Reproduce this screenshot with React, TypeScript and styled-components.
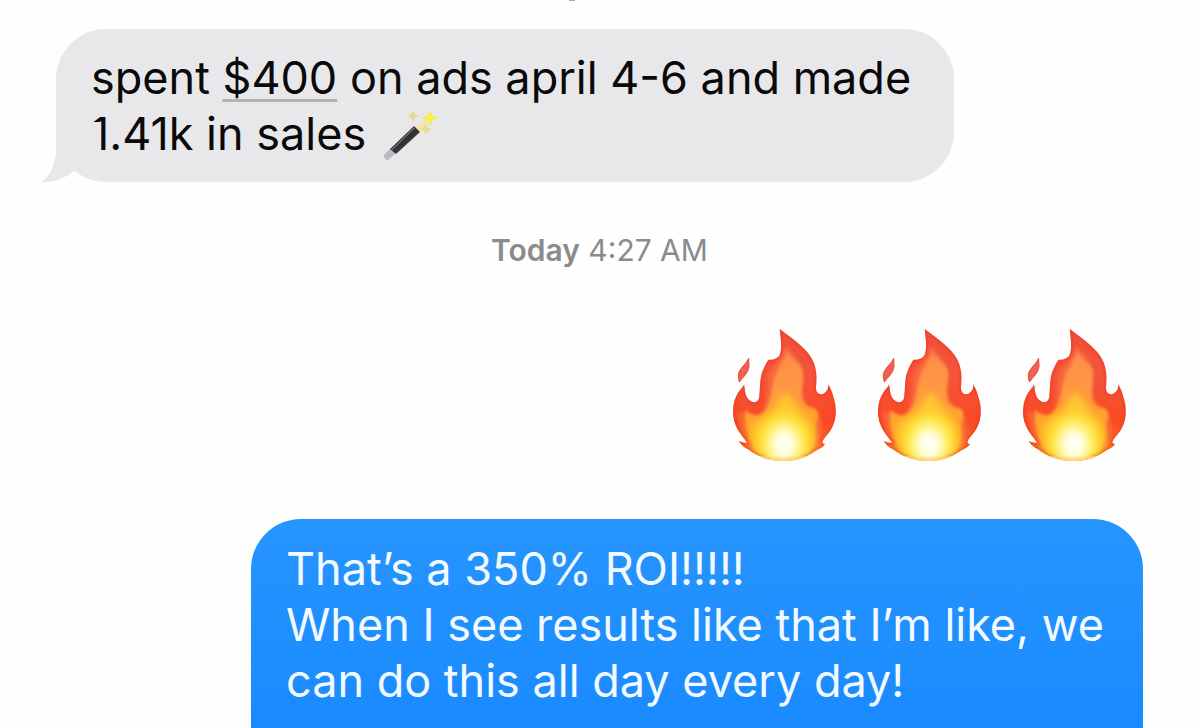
import React from "react";
import styled, { createGlobalStyle } from "styled-components";

const GlobalStyle = createGlobalStyle`
  * { box-sizing: border-box; }
  body {
    margin: 0;
    background: #fefefe;
    font-family: Inter, "Liberation Sans", sans-serif;
  }
`;

const Thread = styled.main`
  display: flex;
  flex-direction: column;
  min-height: 100vh;
  padding: 0 57px 0 56px;
  overflow: hidden;
`;

const EarlierMark = styled.div`
  width: 6px;
  height: 1px;
  margin: 0 0 28px 513px;
  border-radius: 1px;
  background: #a5a5a8;
`;

const Bubble = styled.div<{ $sent?: boolean }>`
  position: relative;
  align-self: ${(p) => (p.$sent ? "flex-end" : "flex-start")};
  flex: ${(p) => (p.$sent ? "1 0 auto" : "none")};
  max-width: ${(p) => (p.$sent ? "892px" : "898px")};
  padding: ${(p) => (p.$sent ? "22px 35px 20px" : "21px 35px 20px")};
  border-radius: ${(p) => (p.$sent ? "50px 50px 0 0" : "50px")};
  background: ${(p) => (p.$sent ? "linear-gradient(#2795fe, #198aff)" : "#e8e8ea")};
  color: ${(p) => (p.$sent ? "#f3faff" : "#0a0a0a")};
`;

const ReceivedBubble = styled(Bubble)`
  width: 100%;
`;

const Message = styled.p`
  margin: 0;
  font-size: 45px;
  line-height: 56px;
`;

const Amount = styled.a`
  color: inherit;
  text-decoration: underline #b3b3b6 3px;
  text-underline-offset: 5px;
  text-decoration-skip-ink: none;
`;

const Tail = styled.svg`
  position: absolute;
  left: -15px;
  bottom: 0;
  width: 60px;
  height: 60px;
`;

const WandIcon = styled.svg`
  width: 56px;
  height: 52px;
  margin-left: 4px;
  vertical-align: -11px;
`;

const Timestamp = styled.time`
  display: block;
  margin: 50px 0 59px;
  text-align: center;
  font-size: 30px;
  line-height: 36px;
  color: #8b8b8e;
`;

const Day = styled.strong`
  font-weight: 600;
`;

const Reactions = styled.div`
  display: flex;
  justify-content: flex-end;
  gap: 35px;
  padding-right: 13px;
  margin-bottom: 57px;
`;

const FlameIcon = styled.svg`
  width: 110px;
  height: 135px;
`;

const BODY =
  "M194 42 C222 64 263 90 284 121 C304 150 307 178 303 216 C302 234 313 241 325 236 C337 230 341 220 339 208 C351 225 354 243 360 263 C367 303 358 336 336 360 C321 377 318 386 330 387 C324 397 314 401 305 405 C276 427 244 438 205 438 C164 438 130 427 99 403 C87 397 77 388 70 377 C80 382 89 384 97 383 C84 365 67 348 58 320 C49 286 56 251 73 228 C80 220 86 214 87 208 C91 227 89 248 108 259 C119 265 130 260 132 249 C137 222 132 190 145 163 C151 150 155 140 161 134 C175 135 189 130 194 119 C202 98 197 71 194 42 Z";

function Flame({ id }: { id: string }) {
  const url = (name: string) => `url(#${id}-${name})`;
  return (
    <FlameIcon viewBox="45 36 330 405" role="img" aria-label="Fire">
      <defs>
        <linearGradient id={`${id}-outer`} x1="0" y1="0" x2="0" y2="1">
          <stop offset="0" stopColor="#f0503a" />
          <stop offset="0.35" stopColor="#f4543a" />
          <stop offset="0.7" stopColor="#f94a22" />
          <stop offset="1" stopColor="#f98524" />
        </linearGradient>
        <linearGradient id={`${id}-inner`} x1="0" y1="0" x2="0" y2="1">
          <stop offset="0" stopColor="#ff8a48" />
          <stop offset="0.4" stopColor="#ff9a40" />
          <stop offset="0.75" stopColor="#ffa726" />
          <stop offset="1" stopColor="#ffae1f" />
        </linearGradient>
        <radialGradient id={`${id}-glow`}>
          <stop offset="0" stopColor="#fffff6" />
          <stop offset="0.22" stopColor="#fffee0" />
          <stop offset="0.42" stopColor="#fff588" stopOpacity="0.95" />
          <stop offset="0.65" stopColor="#ffe23a" stopOpacity="0.75" />
          <stop offset="1" stopColor="#ffb320" stopOpacity="0" />
        </radialGradient>
        <clipPath id={`${id}-shape`}>
          <path d={BODY} />
        </clipPath>
        <filter id={`${id}-soft`} x="-20%" y="-20%" width="140%" height="140%">
          <feGaussianBlur stdDeviation="4" />
        </filter>
        <filter id={`${id}-haze`} x="-30%" y="-30%" width="160%" height="160%">
          <feGaussianBlur stdDeviation="11" />
        </filter>
      </defs>
      <path d={BODY} fill={url("outer")} />
      <g clipPath={url("shape")}>
        <path
          d="M210 94 C192 140 166 150 159 190 C151 228 158 281 133 297 C112 310 88 285 66 292 C72 340 88 372 110 410 L310 410 C308 380 330 350 318 312 C303 278 276 279 266 246 C254 206 286 145 210 94 Z"
          fill="#fa7040"
          opacity="0.65"
          filter={url("soft")}
        />
        <path
          d="M218 108 C207 136 188 158 180 183 C169 218 166 268 148 291 C133 310 107 300 91 285 C87 335 95 376 130 418 L280 418 C311 386 303 350 304 325 C315 302 310 281 294 279 C272 276 261 261 260 237 C260 200 275 168 250 145 C240 134 225 125 218 108 Z"
          fill={url("inner")}
          filter={url("soft")}
        />
        <path
          d="M214 235 C180 250 190 285 168 305 C150 318 122 310 115 335 C109 369 138 405 165 435 L255 435 C292 399 292 345 278 318 C245 310 250 262 214 235 Z"
          fill="#ffd030"
          opacity="0.85"
          filter={url("haze")}
        />
        <ellipse cx="207" cy="388" rx="112" ry="132" fill={url("glow")} />
        <path d={BODY} fill="none" stroke="#e92d20" strokeWidth="7" opacity="0.6" filter={url("soft")} />
        <path d="M130 426 Q205 448 275 426" fill="none" stroke="#ffe88a" strokeWidth="10" filter={url("soft")} />
      </g>
      <path
        d="M101 130 C95 146 80 154 72 171 C68 182 71 191 73 201 C83 187 97 177 101 160 C104 150 100 141 101 130 Z"
        fill="#f26052"
        stroke="#df493b"
        strokeWidth="3"
      />
    </FlameIcon>
  );
}

function Wand() {
  return (
    <WandIcon viewBox="0 0 56 52" role="img" aria-label="Magic wand">
      <defs>
        <linearGradient id="wand-rod" x1="0" y1="0" x2="1" y2="1">
          <stop offset="0.2" stopColor="#777" />
          <stop offset="0.5" stopColor="#303033" />
          <stop offset="0.8" stopColor="#4b4b4e" />
        </linearGradient>
      </defs>
      <path d="M31 19 L42 10 L46 13 L36 24 Z" fill="#f3e5b3" />
      <path d="M1 46 L8 39 L13 44 L5 51 Q1 51 1 46 Z" fill="#b9b9be" />
      <path d="M7 40 L31 17 L37 23 L13 45 Z" fill="url(#wand-rod)" />
      <path d="M9 41 L31 19" stroke="#858588" strokeWidth="1" />
      <path d="M47 0 L49 6 L56 9 L50 11 L48 17 L45 11 L38 9 L45 6 Z" fill="#f0e966" />
      <circle cx="47" cy="9" r="3" fill="#faf739" />
      <path d="M30 2 L32 6 L36 7 L32 9 L30 13 L28 9 L24 7 L28 5 Z" fill="#e2dd8e" />
      <path d="M43 15 L45 19 L49 20 L45 22 L43 26 L41 22 L37 20 L41 18 Z" fill="#e4de86" />
    </WandIcon>
  );
}

export default function App() {
  return (
    <>
      <GlobalStyle />
      <Thread>
        <EarlierMark />
        <ReceivedBubble>
          <Tail viewBox="0 0 60 60" aria-hidden="true">
            <path d="M15 0 L15 30 C14 43 9 55 1 59 Q0 60 2 60 C14 61 26 55 33 49 L60 60 L60 0 Z" fill="#e8e8ea" />
            <path d="M33 49 C25 56 13 61 2 60 L60 60 C50 60 41 56 33 49 Z" fill="#fefefe" />
          </Tail>
          <Message>
            spent <Amount href="#amount">$400</Amount> on ads april 4-6 and made
            <br />
            1.41k in sales <Wand />
          </Message>
        </ReceivedBubble>
        <Timestamp>
          <Day>Today</Day> 4:27 AM
        </Timestamp>
        <Reactions>
          <Flame id="flame-a" />
          <Flame id="flame-b" />
          <Flame id="flame-c" />
        </Reactions>
        <Bubble $sent>
          <Message>
            That’s a 350% ROI!!!!!
            <br />
            When I see results like that I’m like, we can do this all day every day!
          </Message>
        </Bubble>
      </Thread>
    </>
  );
}
